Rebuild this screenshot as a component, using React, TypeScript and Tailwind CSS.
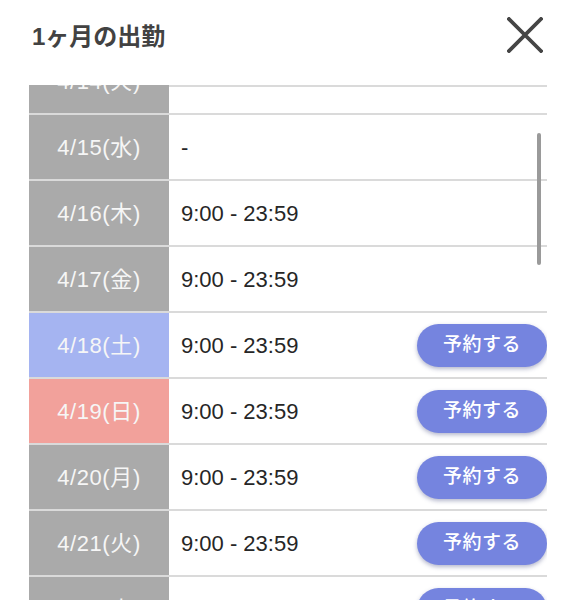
import React from 'react';

type Day = {
  date: string;
  time: string;
  kind: 'weekday' | 'sat' | 'sun';
  bookable: boolean;
};

const DAYS: Day[] = [
  { date: '4/14(火)', time: '-', kind: 'weekday', bookable: false },
  { date: '4/15(水)', time: '-', kind: 'weekday', bookable: false },
  { date: '4/16(木)', time: '9:00 - 23:59', kind: 'weekday', bookable: false },
  { date: '4/17(金)', time: '9:00 - 23:59', kind: 'weekday', bookable: false },
  { date: '4/18(土)', time: '9:00 - 23:59', kind: 'sat', bookable: true },
  { date: '4/19(日)', time: '9:00 - 23:59', kind: 'sun', bookable: true },
  { date: '4/20(月)', time: '9:00 - 23:59', kind: 'weekday', bookable: true },
  { date: '4/21(火)', time: '9:00 - 23:59', kind: 'weekday', bookable: true },
  { date: '4/22(水)', time: '9:00 - 23:59', kind: 'weekday', bookable: true },
];

const dateBg = {
  weekday: 'bg-[#aaaaaa]',
  sat: 'bg-[#a5b4f1]',
  sun: 'bg-[#f2a19b]',
};

function CloseIcon() {
  return (
    <svg width="36" height="36" viewBox="0 0 36 36" aria-hidden>
      <path d="M2 2 L34 34 M34 2 L2 34" stroke="#454545" strokeWidth="3.8" strokeLinecap="square" />
    </svg>
  );
}

function DayRow({ day }: { day: Day }) {
  return (
    <div className="flex h-[66px] border-b-2 border-[#dadada]">
      <div
        className={`w-[140px] shrink-0 flex items-center justify-center text-[22px] tracking-[0.6px] text-[#f6f6f6] ${dateBg[day.kind]}`}
      >
        {day.date}
      </div>
      <div className="flex-1 flex items-center justify-between pl-[12px]">
        <span className="text-[22px] text-[#262626]">{day.time}</span>
        {day.bookable && (
          <button className="w-[130px] h-[43px] rounded-full bg-[#7584df] text-white text-[19px] font-medium tracking-[0.5px] shadow-[0_2px_4px_rgba(40,50,110,0.35)]">
            予約する
          </button>
        )}
      </div>
    </div>
  );
}

export default function App() {
  return (
    <main
      className="w-[576px] h-[615px] bg-white overflow-hidden"
      style={{ fontFamily: '"Liberation Sans", "Noto Sans CJK JP", sans-serif' }}
    >
      {/* Header */}
      <div className="h-[72px] flex items-center justify-between pl-[32px] pr-[33px] mb-[13px]">
        <h1 className="text-[24px] font-bold text-[#424242] pt-[2px]">1ヶ月の出勤</h1>
        <button className="mt-[-2px]">
          <CloseIcon />
        </button>
      </div>

      <div className="relative ml-[29px] w-[518px] h-[515px] overflow-hidden">
        <div className="-mt-[36px]">
          {DAYS.map((d) => (
            <DayRow key={d.date} day={d} />
          ))}
        </div>
        {/* top divider over the time column */}
        <div className="absolute top-0 left-[140px] right-0 h-[2px] bg-[#dadada]" />
        {/* overlay scrollbar */}
        <div className="absolute left-[508px] top-[48px] w-[4px] h-[132px] rounded-full bg-[#9a9a9a]" />
      </div>
    </main>
  );
}
